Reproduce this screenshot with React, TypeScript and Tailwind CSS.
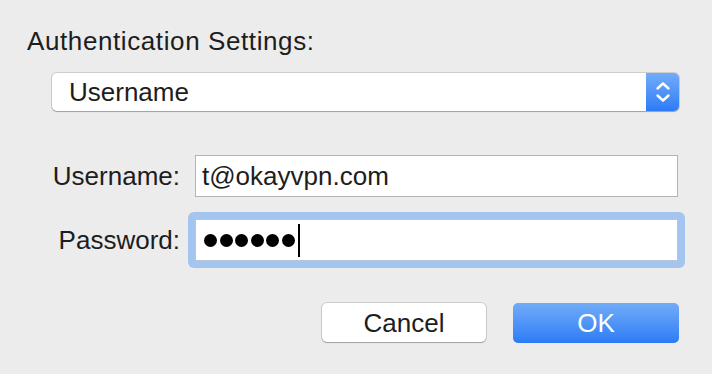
import React from "react";

/** macOS-style authentication sheet */
export default function App() {
  return (
    <div
      className="w-[712px] h-[374px] bg-[#ececec] text-[#1d1d1d] text-[26px] leading-[30px] overflow-hidden"
      style={{ fontFamily: '"Liberation Sans", Arial, sans-serif' }}
    >
      {/* ── Title ─────────────────────────────────────────────── */}
      <div className="pl-[27px] pt-[26px] tracking-[0.6px]">Authentication Settings:</div>

      {/* ── Popup ─────────────────────────────────────────────── */}
      <div className="ml-[52px] mt-[17px] w-[627px] h-[38px] flex bg-white rounded-[5px] shadow-[0_0_0_1px_rgba(0,0,0,0.13),0_1px_1px_rgba(0,0,0,0.22)]">
        <div className="flex-1 flex items-center pl-[17px]">Username</div>
        <div className="w-[33px] h-full rounded-r-[5px] bg-gradient-to-b from-[#72acf8] to-[#2c7bf6] flex items-center justify-center">
          <svg width="16" height="24" viewBox="0 0 16 24" fill="none" stroke="white" strokeWidth="2.4" strokeLinecap="round" strokeLinejoin="round">
            <path d="M2.5 8.5 8 3.5l5.5 5" />
            <path d="M2.5 15.5 8 20.5l5.5-5" />
          </svg>
        </div>
      </div>

      {/* ── Fields ────────────────────────────────────────────── */}
      <div className="mt-[44px] grid grid-cols-[128px_483px] gap-x-[15px] gap-y-[22px] ml-[52px]">
        <div className="h-[42px] flex items-center justify-end">Username:</div>
        <div className="h-[42px] flex items-center bg-white border border-[#b4b4b4] pl-[6px]">t@okayvpn.com</div>

        <div className="h-[42px] flex items-center justify-end">Password:</div>
        <div className="-m-[7px] p-[7px] rounded-[6px] bg-[#a4c5f0]">
          <div className="h-[42px] flex items-center bg-white border border-[#b9c6d6] pl-[8px] gap-[2.5px]">
            {Array.from({ length: 6 }).map((_, i) => (
              <span key={i} className="w-[13px] h-[13px] rounded-full bg-black" />
            ))}
            <span className="w-[2px] h-[33px] bg-black ml-[0.5px]" />
          </div>
        </div>
      </div>

      {/* ── Buttons ───────────────────────────────────────────── */}
      <div className="mt-[42px] flex justify-end gap-[27px] pr-[33px]">
        <button className="w-[164px] h-[39px] bg-white rounded-[5px] shadow-[0_0_0_1px_rgba(0,0,0,0.13),0_1px_1px_rgba(0,0,0,0.22)] flex items-center justify-center">
          Cancel
        </button>
        <button className="w-[166px] h-[40px] rounded-[5px] bg-gradient-to-b from-[#72acf8] to-[#2c7bf6] text-white flex items-center justify-center">
          OK
        </button>
      </div>
    </div>
  );
}
